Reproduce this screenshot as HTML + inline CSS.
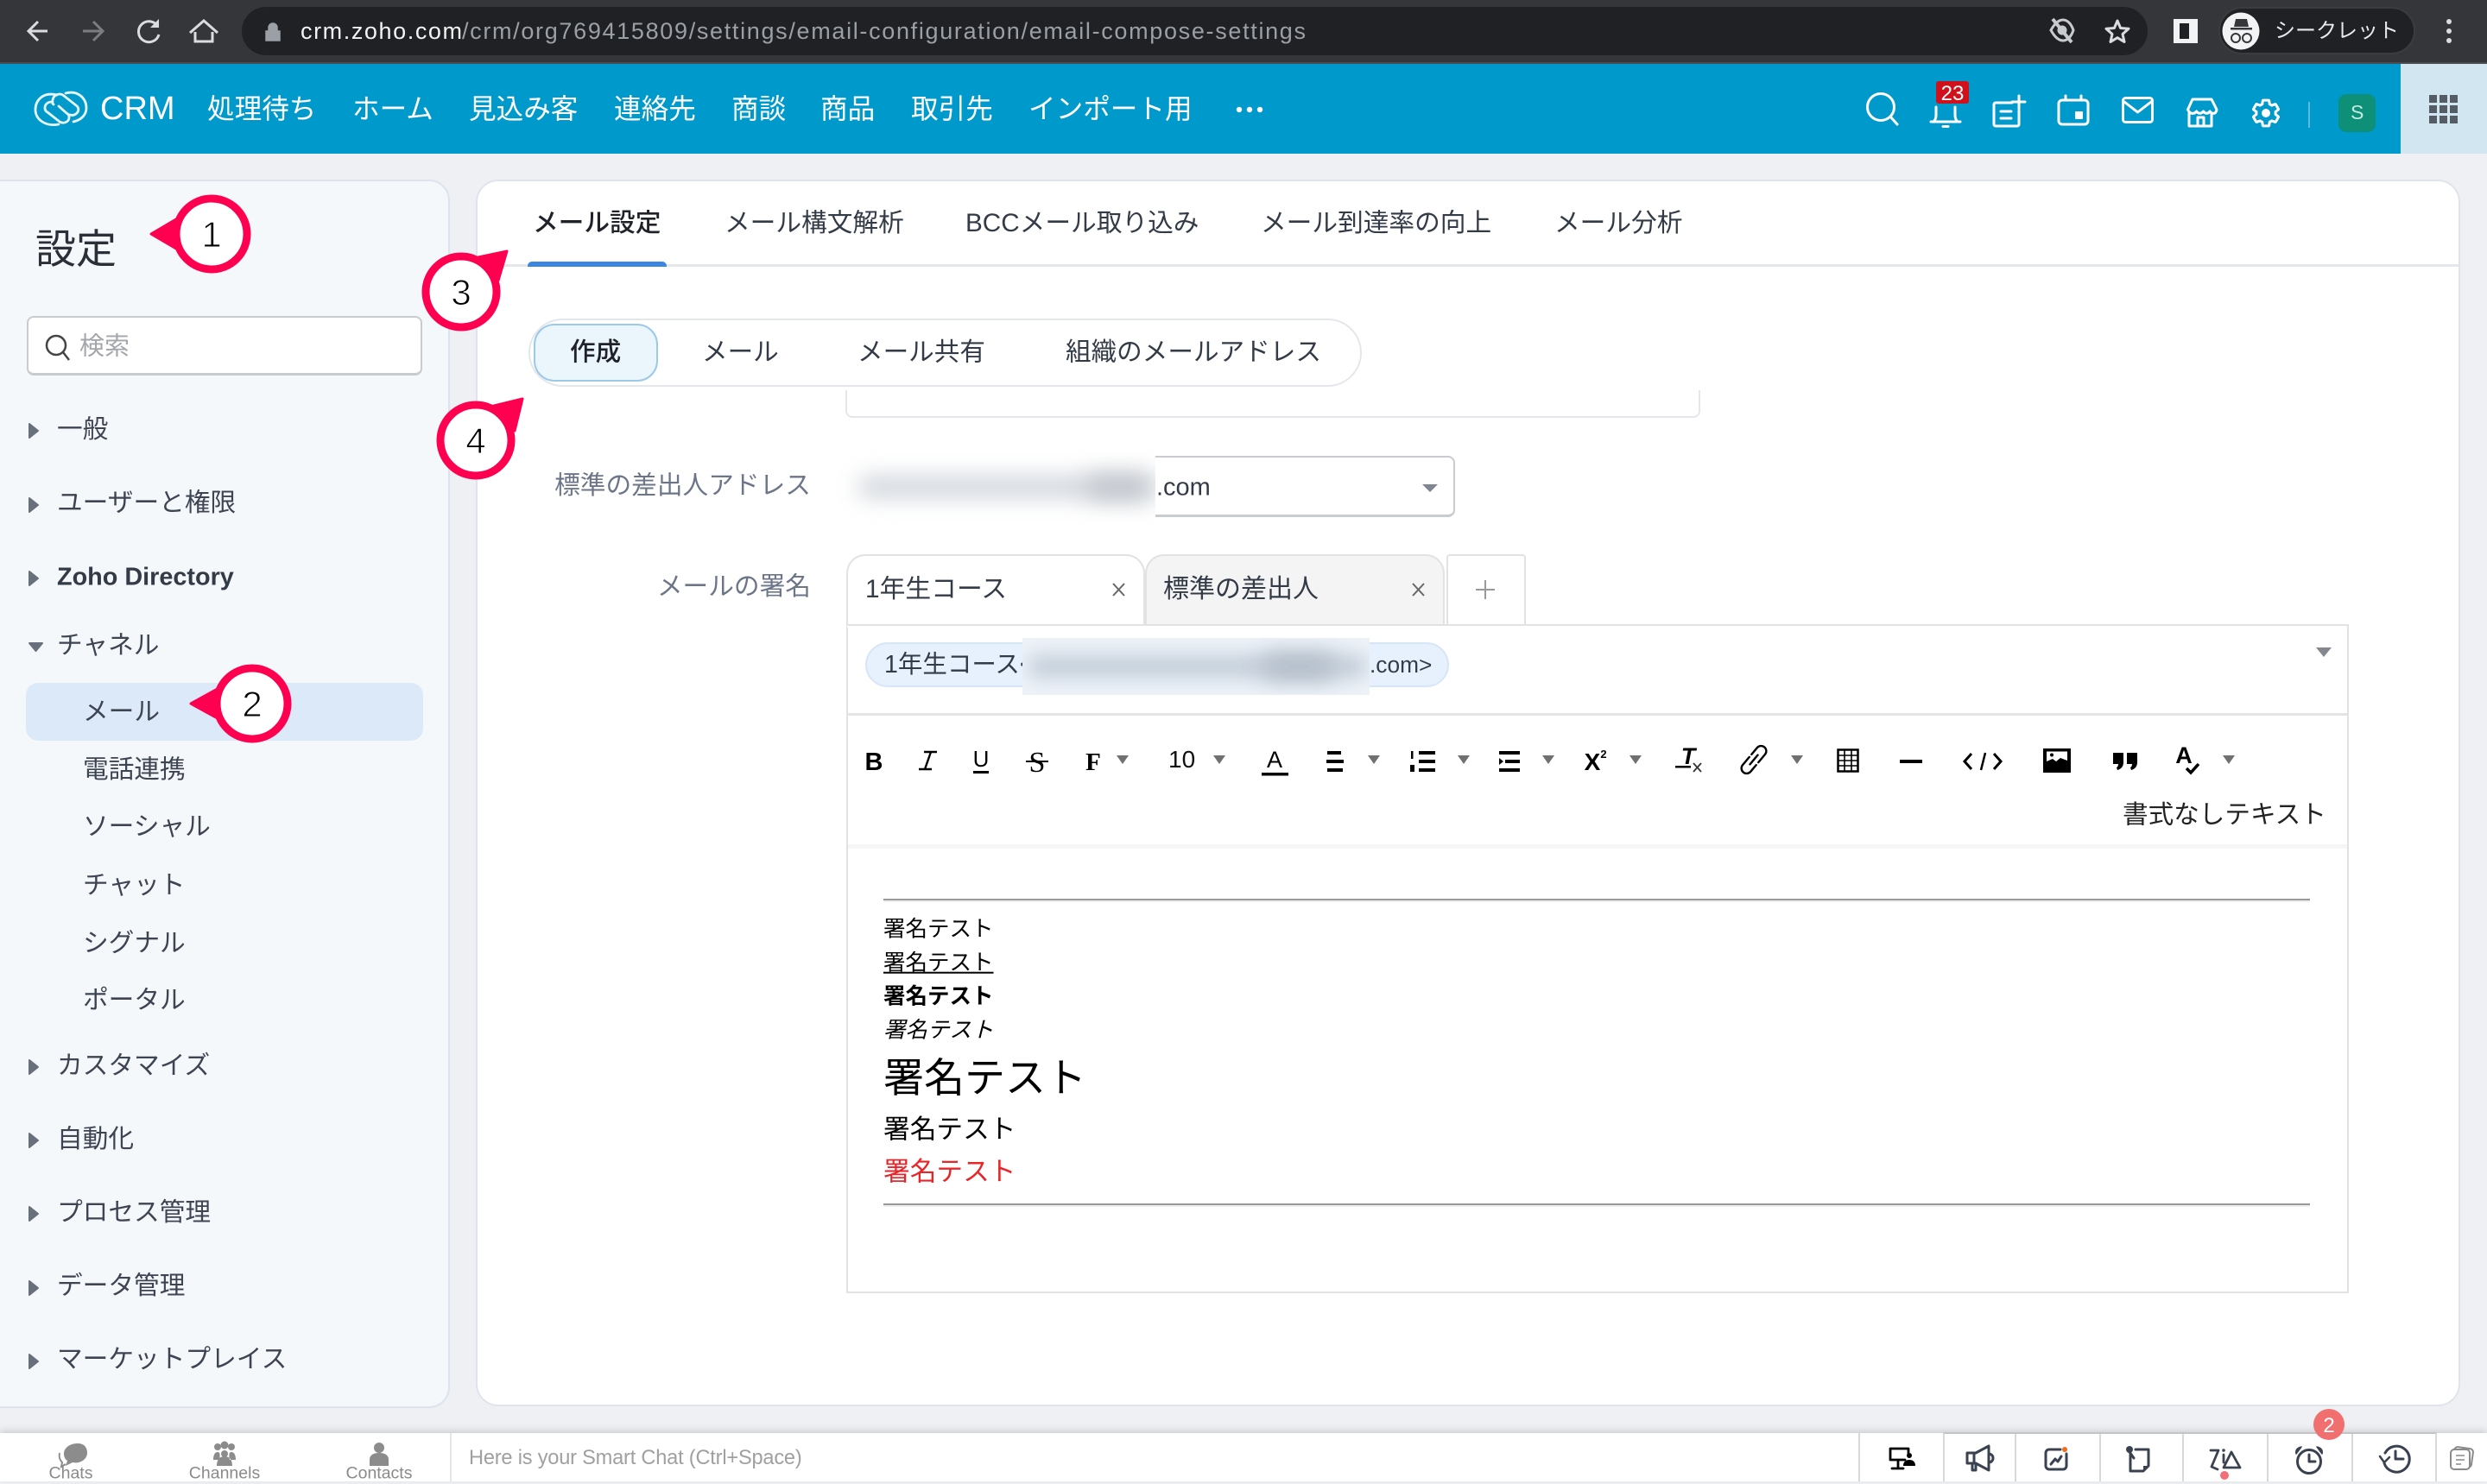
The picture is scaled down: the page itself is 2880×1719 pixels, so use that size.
<!DOCTYPE html>
<html lang="ja"><head><meta charset="utf-8"><title>Zoho CRM メール設定</title>
<style>
*{box-sizing:border-box;margin:0;padding:0}
html,body{width:2880px;height:1716px;overflow:hidden;background:#eef0f4;font-family:"Liberation Sans","Noto Sans CJK JP",sans-serif}
.a{position:absolute}
.t{position:absolute;transform:translateY(-50%);line-height:1.2;white-space:nowrap}
.n{font-size:31.6px;color:#fff;top:127px}
.s{font-size:29.7px;color:#3e4552;left:66px}
.c{font-size:29.7px;color:#3e4552;left:96px}
.tb{font-size:29.7px;color:#333b47;top:259px}
.st{font-size:29.6px;color:#333b47;top:408px}
.sg{left:1023px;color:#000}
.hr{position:absolute;left:1023px;width:1652px;height:4px;border-top:2px solid #999;border-bottom:2px solid #eee}
</style></head><body>
<!-- browser bar -->
<div class="a" style="left:0;top:0;width:2880px;height:74px;background:#35363a;border-bottom:2px solid #4a4c50"></div>
<div class="a" style="left:280px;top:8px;width:2207px;height:56px;background:#202124;border-radius:28px"></div>
<div class="a" style="left:2569px;top:8px;width:228px;height:55px;background:#202124;border-radius:28px;border:2px solid #3b3c40"></div>
<div class="t" style="left:2634px;top:37px;font-size:24px;color:#e8eaed">シークレット</div>
<!-- nav -->
<div class="a" style="left:0;top:74px;width:2880px;height:104px;background:#0099cc"></div>
<div class="a" style="left:2780px;top:74px;width:100px;height:104px;background:#d2e6f1"></div>
<div class="t" style="left:116px;top:127px;font-size:38px;color:#fff">CRM</div>
<div class="t n" style="left:240px">処理待ち</div>
<div class="t n" style="left:408px">ホーム</div>
<div class="t n" style="left:543px">見込み客</div>
<div class="t n" style="left:711px">連絡先</div>
<div class="t n" style="left:847px">商談</div>
<div class="t n" style="left:950px">商品</div>
<div class="t n" style="left:1055px">取引先</div>
<div class="t n" style="left:1191px">インポート用</div>
<div class="a" style="left:2708px;top:109px;width:43px;height:44px;border-radius:9px;background:#0e8f78"></div>
<div class="t" style="left:2722px;top:131px;font-size:23px;color:#c4ebe1">S</div>
<!-- sidebar -->
<div class="a" style="left:-30px;top:208px;width:551px;height:1423px;background:#f5f8fb;border:2px solid #dde3ec;border-radius:24px"></div>
<div class="t" style="left:41px;top:289px;font-size:47px;color:#2a2f38">設定</div>
<div class="a" style="left:31px;top:366px;width:458px;height:69px;background:#fff;border:2px solid #c8cbd0;border-bottom-width:3px;border-radius:8px"></div>
<div class="t" style="left:92px;top:402px;font-size:29px;color:#a3a6ab">検索</div>
<div class="t s" style="top:498px">一般</div>
<div class="t s" style="top:583px">ユーザーと権限</div>
<div class="t s" style="top:669px;font-weight:700;font-size:28.8px;color:#333b47">Zoho Directory</div>
<div class="t s" style="top:748px">チャネル</div>
<div class="a" style="left:30px;top:791px;width:460px;height:67px;background:#dce9f8;border-radius:14px"></div>
<div class="t c" style="top:825px">メール</div>
<div class="t c" style="top:892px">電話連携</div>
<div class="t c" style="top:958px">ソーシャル</div>
<div class="t c" style="top:1026px">チャット</div>
<div class="t c" style="top:1093px">シグナル</div>
<div class="t c" style="top:1159px">ポータル</div>
<div class="t s" style="top:1235px">カスタマイズ</div>
<div class="t s" style="top:1320px">自動化</div>
<div class="t s" style="top:1405px">プロセス管理</div>
<div class="t s" style="top:1490px">データ管理</div>
<div class="t s" style="top:1575px">マーケットプレイス</div>
<!-- main -->
<div class="a" style="left:551px;top:208px;width:2298px;height:1421px;background:#fff;border:2px solid #dfe4ec;border-radius:26px"></div>
<div class="a" style="left:553px;top:306px;width:2294px;height:3px;background:#e5e7ea"></div>
<div class="a" style="left:611px;top:303px;width:161px;height:6px;background:#3b86e0;border-radius:5px 5px 0 0"></div>
<div class="t tb" style="left:617px;font-weight:500;color:#1f2329">メール設定</div>
<div class="t tb" style="left:839px">メール構文解析</div>
<div class="t tb" style="left:1118px">BCCメール取り込み</div>
<div class="t tb" style="left:1460px">メール到達率の向上</div>
<div class="t tb" style="left:1800px">メール分析</div>
<div class="a" style="left:612px;top:369px;width:965px;height:79px;border:2px solid #e3e6ea;border-radius:40px"></div>
<div class="a" style="left:618px;top:375px;width:144px;height:67px;background:#eaf5fc;border:2px solid #9cc9e8;border-radius:24px"></div>
<div class="t st" style="left:660px;font-weight:500;color:#1f2329">作成</div>
<div class="t st" style="left:813px">メール</div>
<div class="t st" style="left:993px">メール共有</div>
<div class="t st" style="left:1234px">組織のメールアドレス</div>
<div class="a" style="left:979px;top:452px;width:990px;height:32px;border:2px solid #e3e6ea;border-top:0;border-radius:0 0 8px 8px"></div>
<div class="t" style="right:1941px;top:563px;font-size:29.7px;color:#6d7688">標準の差出人アドレス</div>
<div class="t" style="right:1941px;top:680px;font-size:29.7px;color:#6d7688">メールの署名</div>
<div class="a" style="left:980px;top:528px;width:705px;height:71px;border:2px solid #c8cbd0;border-bottom-width:3px;border-radius:8px"></div>
<div class="a" style="left:960px;top:512px;width:378px;height:104px;overflow:hidden;background:#fff">
  <div class="a" style="left:36px;top:40px;width:340px;height:24px;background:#ced3da;filter:blur(13px)"></div>
  <div class="a" style="left:300px;top:40px;width:70px;height:24px;background:#bcc1c8;filter:blur(14px)"></div>
</div>
<div class="t" style="left:1339px;top:565px;font-size:29px;color:#333b47">.com</div>
<!-- signature tabs -->
<div class="a" style="left:980px;top:642px;width:346px;height:83px;background:#fff;border:2px solid #e2e2e2;border-bottom:0;border-radius:22px 22px 0 0"></div>
<div class="a" style="left:1326px;top:642px;width:347px;height:82px;background:#f4f4f4;border:2px solid #e2e2e2;border-bottom:0;border-radius:22px 22px 0 0"></div>
<div class="a" style="left:1675px;top:642px;width:92px;height:82px;background:#fff;border:2px solid #e2e2e2;border-bottom:0;border-radius:4px 4px 0 0"></div>
<div class="t" style="left:1002px;top:683px;font-size:29.8px;color:#333b47">1年生コース</div>
<div class="t" style="left:1347px;top:683px;font-size:30px;color:#333b47">標準の差出人</div>
<!-- editor -->
<div class="a" style="left:980px;top:723px;width:1740px;height:775px;border:2px solid #e2e2e2;background:transparent"></div>
<div class="a" style="left:981px;top:725px;width:345px;height:2px;background:#fff"></div>
<div class="a" style="left:982px;top:826px;width:1736px;height:3px;background:#e4e4e4"></div>
<div class="a" style="left:982px;top:978px;width:1736px;height:5px;background:#f6f6f6"></div>
<div class="a" style="left:1002px;top:744px;width:676px;height:52px;background:#e6f1fd;border:2px solid #d7e6f6;border-radius:26px"></div>
<div class="t" style="left:1024px;top:770px;font-size:28.5px;color:#333b47">1年生コース&lt;</div>
<div class="t" style="left:1586px;top:771px;font-size:26.3px;color:#333b47">.com&gt;</div>
<div class="a" style="left:1184px;top:739px;width:402px;height:66px;overflow:hidden;background:#eef3f9">
  <div class="a" style="left:8px;top:20px;width:390px;height:26px;background:#c2ccd8;filter:blur(11px)"></div>
  <div class="a" style="left:280px;top:18px;width:80px;height:30px;background:#b3bdc9;filter:blur(13px)"></div>
</div>
<div class="t" style="left:1353px;top:880px;font-size:28px;color:#111">10</div>
<div class="t" style="left:2458px;top:944px;font-size:29.6px;color:#222">書式なしテキスト</div>
<div class="hr" style="top:1041px"></div>
<div class="t sg" style="top:1077px;font-size:25.5px">署名テスト</div>
<div class="t sg" style="top:1116px;font-size:25.5px;text-decoration:underline">署名テスト</div>
<div class="t sg" style="top:1155px;font-size:25.5px;font-weight:700">署名テスト</div>
<div class="t sg" style="top:1194px;font-size:25.5px;font-style:italic">署名テスト</div>
<div class="t sg" style="top:1249px;font-size:47px">署名テスト</div>
<div class="t sg" style="top:1309px;font-size:30.7px">署名テスト</div>
<div class="t sg" style="top:1358px;font-size:30.7px;color:#e8262a">署名テスト</div>
<div class="hr" style="top:1394px"></div>
<!-- bottom bar -->
<div class="a" style="left:0;top:1660px;width:2880px;height:56px;background:#fff;box-shadow:0 -3px 7px rgba(0,0,0,.14)"></div>
<div class="a" style="left:521px;top:1660px;width:2px;height:56px;background:#e6e6e6"></div>
<div class="t" style="left:82px;top:1707px;font-size:19.5px;color:#8a8a8a;transform:translate(-50%,-50%)">Chats</div>
<div class="t" style="left:260px;top:1707px;font-size:19.5px;color:#8a8a8a;transform:translate(-50%,-50%)">Channels</div>
<div class="t" style="left:439px;top:1707px;font-size:19.5px;color:#8a8a8a;transform:translate(-50%,-50%)">Contacts</div>
<div class="t" style="left:543px;top:1689px;font-size:23.6px;color:#a0a0a0;letter-spacing:-.2px">Here is your Smart Chat (Ctrl+Space)</div>
<div class="a" style="left:2152px;top:1659px;width:2px;height:57px;background:#d8d8d8"></div>
<div class="a" style="left:2250px;top:1660px;width:2px;height:56px;background:#d8d8d8"></div>
<div class="a" style="left:2333px;top:1660px;width:2px;height:56px;background:#d8d8d8"></div>
<div class="a" style="left:2431px;top:1660px;width:2px;height:56px;background:#d8d8d8"></div>
<div class="a" style="left:2527px;top:1660px;width:2px;height:56px;background:#d8d8d8"></div>
<div class="a" style="left:2625px;top:1660px;width:2px;height:56px;background:#d8d8d8"></div>
<div class="a" style="left:2723px;top:1660px;width:2px;height:56px;background:#d8d8d8"></div>
<div class="a" style="left:2820px;top:1660px;width:2px;height:56px;background:#d8d8d8"></div>
<div class="a" style="left:2251px;top:1659px;width:570px;height:2px;background:#c4c4c4"></div>

<svg class="a" style="left:0;top:0" width="2880" height="1716" viewBox="0 0 2880 1716" fill="none" font-family="'Liberation Sans','Noto Sans CJK JP',sans-serif">
<!-- url -->
<text x="348" y="45" font-size="27" fill="#f1f3f4" textLength="187" lengthAdjust="spacing">crm.zoho.com</text>
<text x="535" y="45" font-size="27" fill="#9aa0a6" textLength="977" lengthAdjust="spacing">/crm/org769415809/settings/email-configuration/email-compose-settings</text>
<!-- browser icons -->
<g stroke="#dadce0" stroke-width="3">
<path d="M55 36H34M44 25 33 36l11 11"/>
<path d="M96 36h22M108 25l11 11-11 11" stroke="#7b7d81"/>
<path d="M183 31a12 12 0 1 0 1 9"/>
<path d="M226 37v11h20V37M220 38l16-14 16 14"/>
</g>
<path d="M184 22v10h-10z" fill="#dadce0"/>
<path d="M308 36h16v11h-16zM311 36v-4a5 5 0 0 1 10 0v4" fill="#9aa0a6" stroke="#9aa0a6" stroke-width="1.5"/>
<g stroke="#c8cbce" stroke-width="3">
<path d="M2375 35c5-9 10-12 14-12s9 3 12 12c-3 9-8 12-12 12s-9-3-14-12z"/><circle cx="2388" cy="35" r="4" fill="#c8cbce"/><path d="M2377 22l22 27" stroke-width="4"/>
</g>
<path d="M2452 24l3.600 8.500 9.400.800-7 6.200 2 9-8-4.800-8 4.800 2-9-7-6.200 9.400-.800z" stroke="#dadce0" stroke-width="3" stroke-linejoin="round"/>
<rect x="2517" y="22" width="28" height="28" fill="#f1f3f4"/><rect x="2524" y="27" width="11" height="18" fill="#202124"/>
<circle cx="2595" cy="36" r="21.500" fill="#f1f3f4"/>
<path d="M2587 31l2-9h13l2 9zM2583 32h25v2.500h-25z" fill="#35363a"/>
<g stroke="#35363a" stroke-width="2"><circle cx="2589" cy="44" r="5"/><circle cx="2602" cy="44" r="5"/></g>
<g fill="#dadce0"><circle cx="2836" cy="25" r="3"/><circle cx="2836" cy="36" r="3"/><circle cx="2836" cy="47" r="3"/></g>
<!-- logo -->
<g stroke="#e6f6fc" stroke-width="2.800" stroke-linecap="round">
<path d="M66 110C50 106 41 116 41 127C41 138 52 147 68 144"/>
<path d="M76 108C90 104 100 114 100 125C100 133 94 139 85 141"/>
<path d="M60 118c-5 0-8 3-8 7 0 2 1 4 3 5l14 11c5 3 11 0 11-5 0-2-1-4-3-5l-9-8"/>
<path d="M62 121l-1-1c-1-7 3-11 8-11 2 0 4 1 5 2l14 11c3 2 4 6 1 9-2 2-5 3-8 2"/>
</g>
<g fill="#fff"><circle cx="1435" cy="127" r="3.200"/><circle cx="1447" cy="127" r="3.200"/><circle cx="1459" cy="127" r="3.200"/></g>
<!-- nav icons -->
<g stroke="#fff" stroke-width="3" stroke-linecap="round" stroke-linejoin="round">
<circle cx="2178" cy="124" r="15.500"/><path d="M2189 135l8 9"/>
<path d="M2236 141h34M2240 140c2-3 2-5 2-8v-8M2266 140c-2-3-2-5-2-8v-8"/><path d="M2250 146.500h6"/>
<path d="M2330 119h-19a2 2 0 0 0-2 2v23a2 2 0 0 0 2 2h25a2 2 0 0 0 2-2v-16M2317 129h12M2317 137h12M2338 111v15M2330 118h15"/>
<rect x="2384" y="116" width="34" height="28" rx="4"/><path d="M2392 111v5M2410 111v5"/>
<rect x="2458.500" y="113.500" width="34" height="28" rx="3"/><path d="M2460 118l15.500 12 15.500-12"/>
<path d="M2539 115h22l6 12c-1 6-6 5-8 2-2 3-5 3-7.500 0-2.500 3-5.500 3-8 0-2 3-7 4-10-2zM2535 131v15h26v-15M2545 146v-10h7v10"/>
<path transform="translate(2605.400 112.400) scale(1.550)" stroke-width="1.950" d="M19.140 12.940c.04-.3.06-.61.06-.94 0-.32-.02-.64-.07-.94l2.030-1.580c.18-.14.23-.41.12-.61l-1.920-3.320c-.12-.22-.37-.29-.59-.22l-2.390.96c-.5-.38-1.030-.7-1.620-.94l-.36-2.540c-.04-.24-.24-.41-.48-.41h-3.840c-.24 0-.43.17-.47.41l-.36 2.540c-.59.24-1.130.57-1.620.94l-2.390-.96c-.22-.08-.47 0-.59.22L2.740 8.870c-.12.21-.08.47.12.61l2.030 1.580c-.05.3-.09.63-.09.94s.02.64.07.94l-2.030 1.580c-.18.14-.23.41-.12.61l1.920 3.320c.12.22.37.29.59.22l2.390-.96c.5.38 1.030.7 1.620.94l.36 2.540c.05.24.24.41.48.41h3.840c.24 0 .44-.17.47-.41l.36-2.540c.59-.24 1.130-.56 1.620-.94l2.390.96c.22.08.47 0 .59-.22l1.920-3.320c.12-.22.07-.47-.12-.61l-2.010-1.580z"/>
</g>
<rect x="2403" y="129" width="9" height="9" rx="1" fill="#fff"/>
<circle cx="2624" cy="131" r="5" fill="#fff"/>
<rect x="2242" y="94" width="38" height="26" rx="3" fill="#d0111b"/>
<text x="2261" y="116" font-size="24" fill="#fff" text-anchor="middle">23</text>
<rect x="2673" y="118" width="2" height="30" fill="#5db8da"/>
<g fill="#555c66">
<rect x="2813" y="110" width="9" height="9"/><rect x="2825" y="110" width="9" height="9"/><rect x="2837" y="110" width="9" height="9"/>
<rect x="2813" y="122" width="9" height="9"/><rect x="2825" y="122" width="9" height="9"/><rect x="2837" y="122" width="9" height="9"/>
<rect x="2813" y="134" width="9" height="9"/><rect x="2825" y="134" width="9" height="9"/><rect x="2837" y="134" width="9" height="9"/>
</g>
<!-- search icon -->
<circle cx="65" cy="400" r="11" stroke="#444" stroke-width="2.500"/><path d="M73 408l7 9" stroke="#444" stroke-width="2.500"/>
<!-- sidebar arrows -->
<g fill="#68707c" stroke="#68707c" stroke-width="2" stroke-linejoin="round">
<path d="M34 491l10 8-10 8z"/><path d="M34 577l10 8-10 8z"/><path d="M34 662l10 8-10 8z"/>
<path d="M34 745h15l-7.500 9z"/>
<path d="M34 1228l10 8-10 8z"/><path d="M34 1313l10 8-10 8z"/><path d="M34 1398l10 8-10 8z"/><path d="M34 1484l10 8-10 8z"/><path d="M34 1569l10 8-10 8z"/>
</g>
<path d="M1647 561h18l-9 9z" fill="#7f8591"/>
<!-- tab close/plus -->
<g stroke="#666" stroke-width="2">
<path d="M1289 676l13 14M1302 676l-13 14"/><path d="M1636 676l13 14M1649 676l-13 14"/>
<path d="M1720 672v22M1709 683h22" stroke="#999"/>
</g>
<path d="M2682 750h18l-9 11z" fill="#85878f"/>
<!-- toolbar carets -->
<g fill="#707070">
<path d="M1293 875h14l-7 10z"/><path d="M1405 875h14l-7 10z"/><path d="M1584 875h14l-7 10z"/><path d="M1688 875h14l-7 10z"/><path d="M1786 875h14l-7 10z"/><path d="M1887 875h14l-7 10z"/><path d="M2074 875h14l-7 10z"/><path d="M2574 875h14l-7 10z"/>
</g>
<!-- toolbar glyph icons -->
<g fill="#000">
<text x="1012" y="892" font-size="29" font-weight="700" text-anchor="middle">B</text>
<text x="1136" y="888" font-size="26" text-anchor="middle">U</text><rect x="1127" y="893" width="18" height="3"/>
<text x="1201" y="894" font-size="34" font-family="'Liberation Serif',serif" text-anchor="middle">S</text><rect x="1188" y="881" width="26" height="2"/>
<text x="1266" y="892" font-size="29" font-weight="700" font-family="'Liberation Serif',serif" text-anchor="middle">F</text>
<text x="1476" y="889" font-size="27" text-anchor="middle">A</text><rect x="1461" y="895" width="31" height="3.500"/>
<rect x="1537" y="870" width="16" height="4"/><rect x="1536" y="880" width="20" height="4"/><rect x="1537" y="890" width="18" height="4"/>
<rect x="1643" y="870" width="19" height="4"/><rect x="1643" y="880" width="19" height="4"/><rect x="1643" y="890" width="19" height="4"/><rect x="1634" y="870" width="2.500" height="9"/><rect x="1633" y="886" width="5" height="8"/>
<rect x="1736" y="870" width="24" height="4"/><rect x="1743" y="880" width="17" height="4"/><rect x="1736" y="890" width="24" height="4"/><path d="M1736 878l5 4-5 4z"/>
<text x="1844" y="892" font-size="28" font-weight="700" text-anchor="middle">X</text><text x="1857" y="878" font-size="13" font-weight="700" text-anchor="middle">2</text>
<text x="1955" y="885" font-size="27" font-weight="700" font-style="italic" text-anchor="middle">T</text>
<rect x="1940" y="887" width="18" height="2.500"/>
<rect x="2200" y="880" width="26" height="4"/>
<rect x="2366" y="867" width="32" height="28"/>
<path d="M2447 872h12v11q0 7-7 9l-1-3q2-1 2-4h-6zM2463 872h12v11q0 7-7 9l-1-3q2-1 2-4h-6z"/>
<text x="2529" y="884" font-size="27" font-weight="700" text-anchor="middle">A</text>
</g>
<rect x="2370" y="870.500" width="24" height="15" fill="#fff"/>
<path d="M2370 882l7-3 4 3 5-4 8 3v6h-24z" fill="#000"/><circle cx="2376" cy="874.500" r="2" fill="#000"/>
<g stroke="#000" stroke-width="2.500" fill="none">
<path d="M1070 871h15M1064 891h15M1078 871l-7 20" stroke-width="2.400"/>
<path d="M1961 884l9 10M1970 884l-9 10" stroke-width="1.800" stroke="#333"/>
<rect x="2128.500" y="868.500" width="23" height="25"/><path d="M2136 869v24M2144 869v24M2129 875h22M2129 881h22M2129 887h22" stroke-width="1.600"/>
<g transform="translate(2031 880) rotate(-50)" stroke-width="2.400" stroke-linecap="round"><path d="M-1 -6H-13a6 6 0 0 0 0 12H-3M1 6H13a6 6 0 0 0 0 -12H3M-7 0H7"/></g>
<path d="M2283 873l-8 9 8 9M2309 873l8 9-8 9" stroke-width="3"/><path d="M2299 872l-5 20" stroke-width="2.500"/>
<path d="M2532 890l5 5 9-10" stroke-width="3.500"/>
</g>
<!-- bottom left icons -->
<g fill="#8c8c8c">
<path d="M90 1672c-9 0-16 5-16 12 0 3 1 6 4 8l-2 6 8-4c9 2 17-4 17-11s-4-11-11-11z"/>
<path d="M69 1683c-1 5 0 8 3 11l-1 5 5-3" stroke="#8c8c8c" stroke-width="2" fill="none"/>
<circle cx="252" cy="1676" r="4"/><circle cx="268" cy="1676" r="4"/><circle cx="260" cy="1674" r="4.500"/><circle cx="260" cy="1684" r="4"/><path d="M247 1691c0-6 2-9 5-9s3 3 2 9zM273 1691c0-6-2-9-5-9s-3 3-2 9zM251 1698c0-8 4-11 9-11s9 3 9 11z"/>
<circle cx="439" cy="1677" r="6"/><path d="M428 1698v-7c0-6 5-8 11-8s11 2 11 8v7z"/>
</g>
<!-- bottom right icons -->
<g stroke="#000" stroke-width="2.800" stroke-linejoin="round" stroke-linecap="round">
<path d="M2206 1691h-17v-13h21v6M2198 1692v8M2191 1701h13"/>
</g>
<circle cx="2211" cy="1686" r="3" fill="#000"/><path d="M2204 1698c0-5 3-7 7-7s7 2 7 7z" fill="#000"/>
<g stroke="#3a4250" stroke-width="3" stroke-linejoin="round" stroke-linecap="round">
<path d="M2278 1683h10l15-8v28l-15-8h-10zM2284 1695v8h4v-8M2303 1684a5 5 0 0 1 0 10M2286 1683v12"/>
<path d="M2386 1679h-13a4 4 0 0 0-4 4v15a4 4 0 0 0 4 4h16a4 4 0 0 0 4-4v-14M2375 1696l5-6 3 3 4-6"/>
<path d="M2473 1679h15v19l-6 6h-15v-19M2464 1679l7 10"/>
<path d="M2560 1680h9l-8 19 7 3M2575 1685v9M2575 1700l9-18 10 18z" stroke-width="2.800"/>
<circle cx="2674" cy="1693" r="13.500"/><path d="M2674 1685v8h7"/>
<path d="M2659 1684c-1-4 1-7 6-8zM2689 1684c1-4-1-7-6-8z" fill="#3a4250" stroke-width="1.500"/>
<path d="M2762 1683a15 15 0 1 1-1 12M2774 1681v9h9"/>
<path d="M2756 1687l5 7 6-6" stroke-width="2.500"/>
</g>
<circle cx="2575" cy="1680" r="1.800" fill="#3a4250"/>
<path d="M2482 1705v-7h6z" fill="#3a4250"/>
<circle cx="2466" cy="1679" r="4" fill="#3a4250"/>
<circle cx="2391" cy="1679" r="3" fill="#f26a1b"/>
<circle cx="2576" cy="1709" r="5" fill="#f26f7a"/>
<g stroke="#8a8a8a" stroke-width="2" fill="#fff"><rect x="2841" y="1677" width="22" height="22" rx="4" transform="rotate(8 2852 1688)"/><rect x="2838" y="1679" width="22" height="23" rx="4"/></g>
<path d="M2844 1686h10M2844 1691h10M2844 1696h6" stroke="#8a8a8a" stroke-width="1.600"/>
<circle cx="2697" cy="1650" r="18" fill="#f26f6f"/><text x="2697" y="1659" font-size="24" fill="#fff" text-anchor="middle">2</text>
<!-- bubbles -->
<g fill="#ff0050" stroke="#ff0050" stroke-width="3" stroke-linejoin="round">
<path d="M175 271l34-20v40z"/><path d="M221 815l38-21v42z"/>
<path d="M587 291l-38 8 28 26z"/><path d="M605 462l-37 9 28 28z"/>
</g>
<g fill="#fff" stroke="#ff0050" stroke-width="9">
<circle cx="245" cy="271" r="41"/><circle cx="292" cy="815" r="41"/><circle cx="534" cy="338" r="41"/><circle cx="551" cy="510" r="41"/>
</g>
<g fill="#000" font-size="42" text-anchor="middle" stroke="#fff" stroke-width="1">
<text x="245" y="286">1</text><text x="292" y="830">2</text><text x="534" y="353">3</text><text x="551" y="525">4</text>
</g>
</svg>
</body></html>
